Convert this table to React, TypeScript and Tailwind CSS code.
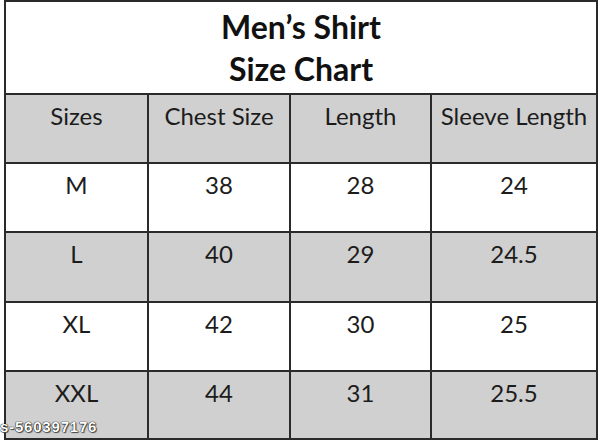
import React from "react";

const rows = [
  { size: "M", chest: "38", length: "28", sleeve: "24", h: "h-[69px]", gray: false },
  { size: "L", chest: "40", length: "29", sleeve: "24.5", h: "h-[70px]", gray: true },
  { size: "XL", chest: "42", length: "30", sleeve: "25", h: "h-[69px]", gray: false },
  { size: "XXL", chest: "44", length: "31", sleeve: "25.5", h: "h-[68px]", gray: true },
];

function Row({ cells, h, gray }: { cells: string[]; h: string; gray: boolean }) {
  return (
    <div className={`flex border-t-2 border-[#2a2a2a] ${h} ${gray ? "bg-[#d0d0d0]" : "bg-white"}`}>
      <div className="w-[141px] flex justify-center pt-[5px]">{cells[0]}</div>
      <div className="w-[142px] flex justify-center pt-[5px] border-l-2 border-[#2a2a2a]">{cells[1]}</div>
      <div className="w-[141px] flex justify-center pt-[5px] border-l-2 border-[#2a2a2a]">{cells[2]}</div>
      <div className="flex-1 flex justify-center pt-[5px] border-l-2 border-[#2a2a2a]">{cells[3]}</div>
    </div>
  );
}

export default function App() {
  return (
    <div className="relative w-[600px] h-[441px] bg-white overflow-hidden font-['Lato','Noto_Sans',sans-serif] text-[#1c1c1c]">
      <div className="ml-[4px] w-[594px] border-2 border-[#2a2a2a] text-[24px] leading-[32px]">
        <div className="h-[91px] flex flex-col items-center justify-center font-bold text-[32px] leading-[42px] text-[#111]">
          <div>Men’s Shirt</div>
          <div>Size Chart</div>
        </div>
        <Row cells={["Sizes", "Chest Size", "Length", "Sleeve Length"]} h="h-[69px]" gray />
        {rows.map((r) => (
          <Row key={r.size} cells={[r.size, r.chest, r.length, r.sleeve]} h={r.h} gray={r.gray} />
        ))}
      </div>
      <div className="absolute left-0 bottom-[3px] text-[15px] font-bold text-white tracking-[0.8px] font-['Liberation_Sans',sans-serif] [text-shadow:0_0_1px_#000,0_0_1px_#000,1px_1px_1px_#555]">
        s-560397176
      </div>
    </div>
  );
}
